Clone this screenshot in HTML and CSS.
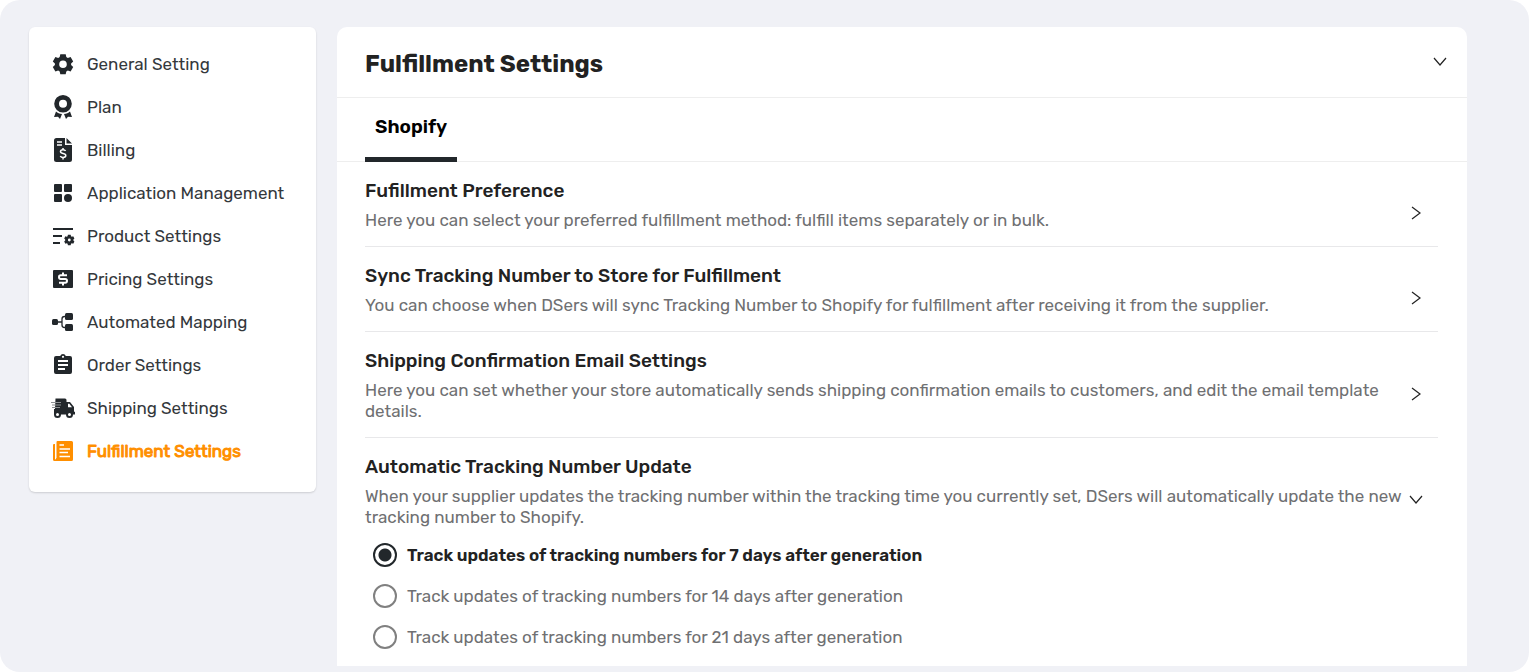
FILE: index.html
```
<!DOCTYPE html>
<html lang="en">
<head>
    <meta charset="UTF-8">
    <meta name="viewport" content="width=device-width, initial-scale=1.0">
    <title>Fulfillment Settings</title>
    <link rel="stylesheet" href="styles.css">
</head>
<body>
    <div class="page">
        <nav class="sidebar">
            <a class="nav-item" href="#general">
                <svg class="nav-icon" viewBox="0 0 24 24"><path fill-rule="evenodd" d="M9.300 2.200h5.400l.6 2.900 1.500.9 2.800-1 2.600 4.600-2.100 1.800v1.700l2.100 1.900-2.600 4.600-2.800-1-1.500.9-.6 2.800H9.300l-.6-2.800-1.500-.9-2.800 1L1.800 15l2.100-1.900v-1.700L1.800 9.600 4.400 5l2.800 1 1.500-.9zM12 8.400a3.800 3.800 0 1 0 0 7.600 3.800 3.800 0 0 0 0-7.600z"/></svg>
                General Setting
            </a>
            <a class="nav-item" href="#plan">
                <svg class="nav-icon" viewBox="0 0 24 24"><path fill-rule="evenodd" d="M12 0a8.800 8.800 0 1 1 0 17.600A8.800 8.800 0 0 1 12 0zm0 4.800a4 4 0 1 0 0 8 4 4 0 0 0 0-8z"/><path d="M5 16.500c1.600 1.500 3.500 2.200 6 2.400L9 24l-2-2.200-4 .2zM19 16.500c-1.600 1.500-3.500 2.200-6 2.400l2 5.100 2-2.200 4 .2z"/></svg>
                Plan
            </a>
            <a class="nav-item" href="#billing">
                <svg class="nav-icon" viewBox="0 0 24 24"><path d="M5.500 0H14v7h7v14.500a2.500 2.500 0 0 1-2.500 2.500h-13A2.500 2.500 0 0 1 3 21.500v-19A2.500 2.500 0 0 1 5.500 0zM15.500 0 21 5.600h-5.500z"/><path class="cut" d="M6 4h5M6 7h5M14.600 13c-.5-.9-1.400-1.300-2.600-1.300-1.500 0-2.500.7-2.500 1.900 0 2.700 5.300 1.200 5.300 4 0 1.200-1.100 1.900-2.700 1.900-1.300 0-2.300-.5-2.800-1.500M12 10v2M12 19.400v2"/></svg>
                Billing
            </a>
            <a class="nav-item" href="#applications">
                <svg class="nav-icon" viewBox="0 0 24 24"><rect x="3" y="3" width="8" height="8" rx="1"/><rect x="13" y="3" width="8" height="8" rx="1"/><rect x="3" y="13" width="8" height="8" rx="1"/><circle cx="17" cy="17" r="4"/></svg>
                Application Management
            </a>
            <a class="nav-item" href="#product">
                <svg class="nav-icon" viewBox="0 0 24 24"><path d="M2 4h20v2H2zM2 11h9v2H2zM2 18h7v2H2z"/><path fill-rule="evenodd" d="M16.900 10.800h2.800l.3 1.400.9.500 1.300-.4 1.200 2.100-1 1v1.200l1 1-1.200 2.100-1.300-.4-.9.500-.3 1.400h-2.800l-.3-1.400-.9-.5-1.300.4-1.200-2.100 1-1v-1.200l-1-1 1.200-2.100 1.300.4.900-.5zM18.300 14.600a1.400 1.400 0 1 0 0 2.800 1.400 1.400 0 0 0 0-2.800z"/></svg>
                Product Settings
            </a>
            <a class="nav-item" href="#pricing">
                <svg class="nav-icon" viewBox="0 0 24 24"><rect x="2" y="3" width="20" height="18" rx="1"/><path class="cut thick" d="M16 8.200H9.700c-1 0-1.700.7-1.700 1.800s.7 1.900 1.700 1.900h4.500c1 0 1.800.8 1.800 1.900s-.8 1.900-1.800 1.900H8M12 5.500v2.500M12 16v2.500"/></svg>
                Pricing Settings
            </a>
            <a class="nav-item" href="#mapping">
                <svg class="nav-icon" viewBox="0 0 24 24"><rect x="1" y="9" width="6" height="6" rx="1.500"/><rect x="14" y="3" width="8" height="7" rx="1.500"/><rect x="14" y="14" width="8" height="7" rx="1.500"/><path class="line" d="M7 12h4M15 6.500h-1.500q-2.500 0-2.500 2.500v6q0 2.500 2.500 2.500H15"/></svg>
                Automated Mapping
            </a>
            <a class="nav-item" href="#order">
                <svg class="nav-icon" viewBox="0 0 24 24"><path fill-rule="evenodd" d="M5 3h4.200a3 3 0 0 1 5.600 0H19a2 2 0 0 1 2 2v14a2 2 0 0 1-2 2H5a2 2 0 0 1-2-2V5a2 2 0 0 1 2-2zm7-.3a1.100 1.100 0 1 0 0 2.200 1.100 1.100 0 0 0 0-2.200z"/><path class="cut thick" d="M7 8h10M7 12h10M7 16h7"/></svg>
                Order Settings
            </a>
            <a class="nav-item" href="#shipping">
                <svg class="nav-icon" viewBox="0 0 24 24"><path d="M4.500 2.500h9.500q1.500 0 1.500 1.500v2H19l4 5v4.500l1 .5v2.500H3V13h1z"/><path class="streak" d="M0 6.500h10M1 9h9M1 11.500h8"/><path fill="#ffffff" d="M17 7.800h1.300l2.700 3.400h-4z"/><circle class="wheel" cx="6.500" cy="18.500" r="2.500"/><circle class="wheel" cx="18.500" cy="18.500" r="2.500"/></svg>
                Shipping Settings
            </a>
            <a class="nav-item active" href="#fulfillment">
                <svg class="nav-icon" viewBox="0 0 24 24"><path d="M6.500 2h14A1.500 1.500 0 0 1 22 3.500v17a1.500 1.500 0 0 1-1.500 1.500H7a2 2 0 0 0 .8-1.500H5.500V3a1 1 0 0 1 1-1zM4 5v15.500h2.300A1.500 1.500 0 0 1 5 22H3.500A1.500 1.500 0 0 1 2 20.500V6q0-1 1-1z"/><path d="M5.500 19h3v3h-5z"/><path class="cut" d="M8.500 6h4.500M8.500 10h10.500M8.500 13.500h8.500M8.500 17.500h10.500"/></svg>
                Fulfillment Settings
            </a>
        </nav>

        <main class="panel">
            <header class="panel-header">
                <h1>Fulfillment Settings</h1>
                <button class="toggle" aria-label="Collapse fulfillment settings">
                    <svg viewBox="0 0 14 14"><path d="M1 3l6 7 6-7"/></svg>
                </button>
            </header>
            <div class="tabs">
                <button class="tab">Shopify</button>
            </div>
            <div class="sections">
                <section class="section">
                    <div class="section-row">
                        <div class="section-text">
                            <h2>Fufillment Preference</h2>
                            <p>Here you can select your preferred fulfillment method: fulfill items separately or in bulk.</p>
                        </div>
                        <button class="toggle" aria-label="Open fulfillment preference">
                            <svg viewBox="0 0 14 14"><path d="M3 1l8 6-8 6"/></svg>
                        </button>
                    </div>
                </section>
                <section class="section">
                    <div class="section-row">
                        <div class="section-text">
                            <h2>Sync Tracking Number to Store for Fulfillment</h2>
                            <p>You can choose when DSers will sync Tracking Number to Shopify for fulfillment after receiving it from the supplier.</p>
                        </div>
                        <button class="toggle" aria-label="Open tracking number sync">
                            <svg viewBox="0 0 14 14"><path d="M3 1l8 6-8 6"/></svg>
                        </button>
                    </div>
                </section>
                <section class="section">
                    <div class="section-row">
                        <div class="section-text">
                            <h2>Shipping Confirmation Email Settings</h2>
                            <p>Here you can set whether your store automatically sends shipping confirmation emails to customers, and edit the email template details.</p>
                        </div>
                        <button class="toggle" aria-label="Open shipping confirmation email settings">
                            <svg viewBox="0 0 14 14"><path d="M3 1l8 6-8 6"/></svg>
                        </button>
                    </div>
                </section>
                <section class="section">
                    <div class="section-row">
                        <div class="section-text">
                            <h2>Automatic Tracking Number Update</h2>
                            <p>When your supplier updates the tracking number within the tracking time you currently set, DSers will automatically update the new tracking number to Shopify.</p>
                        </div>
                        <button class="toggle" aria-label="Close automatic tracking number update">
                            <svg viewBox="0 0 14 14"><path d="M1 3l6 7 6-7"/></svg>
                        </button>
                    </div>
                    <div class="options">
                        <label class="option">
                            <input type="radio" name="track-days" value="7" checked>
                            <span>Track updates of tracking numbers for 7 days after generation</span>
                        </label>
                        <label class="option">
                            <input type="radio" name="track-days" value="14">
                            <span>Track updates of tracking numbers for 14 days after generation</span>
                        </label>
                        <label class="option">
                            <input type="radio" name="track-days" value="21">
                            <span>Track updates of tracking numbers for 21 days after generation</span>
                        </label>
                    </div>
                </section>
            </div>
        </main>
    </div>
</body>
</html>
```
FILE: styles.css
```
* {
    margin: 0;
    padding: 0;
    box-sizing: border-box;
}

body {
    background-color: #ffffff;
    color: #22262a;
    font-family: Rubik, Roboto, sans-serif;
    font-size: 17px;
}

button {
    background: none;
    border: none;
    font-family: inherit;
    cursor: pointer;
}

.page {
    display: flex;
    align-items: flex-start;
    gap: 21px;
    min-height: 100vh;
    padding: 27px 62px 6px 29px;
    background-color: #f0f1f6;
    border-radius: 20px;
}

.sidebar {
    display: flex;
    flex-direction: column;
    flex: 0 0 287px;
    padding: 15px 22px 20px;
    background-color: #ffffff;
    border-radius: 6px;
    box-shadow: 0 1px 2px rgba(0, 0, 0, 0.15);
}

.nav-item {
    display: flex;
    align-items: center;
    gap: 12px;
    height: 43px;
    color: #34383c;
    text-decoration: none;
}

    .nav-item.active {
        color: #ff8f00;
        -webkit-text-stroke: 1px #ff8f00;
    }

.nav-icon {
    flex: none;
    width: 24px;
    height: 24px;
    fill: #22272b;
    overflow: visible;
}

    .nav-icon .cut {
        fill: none;
        stroke: #ffffff;
        stroke-width: 1.5;
    }

    .nav-icon .thick {
        stroke-width: 2;
    }

    .nav-icon .line {
        fill: none;
        stroke: #22272b;
        stroke-width: 1.3;
    }

    .nav-icon .streak {
        fill: none;
        stroke: #8c8f92;
        stroke-width: 1.2;
    }

    .nav-icon .wheel {
        fill: #ffffff;
        stroke: #22272b;
        stroke-width: 2;
    }

.active .nav-icon {
    fill: #ff8f00;
}

.panel {
    flex: 1;
    min-width: 0;
    background-color: #ffffff;
    border-radius: 10px 10px 0 0;
}

.panel-header {
    display: flex;
    justify-content: space-between;
    align-items: center;
    height: 71px;
    padding: 0 20px 0 28px;
    border-bottom: 1px solid #eeeeee;
}

    .panel-header h1 {
        padding-top: 3px;
        font-size: 24px;
        font-weight: 700;
        line-height: 32px;
        color: #222222;
    }

.toggle {
    display: flex;
    flex: none;
}

    .toggle svg {
        width: 14px;
        height: 14px;
        fill: none;
        stroke: #222222;
        stroke-width: 1.2;
    }

.tabs {
    display: flex;
    height: 64px;
    padding-left: 28px;
    box-shadow: inset 0 -1px #eeeeee;
}

.tab {
    padding: 0 10px 2px;
    border-bottom: 5px solid #22272b;
    font-size: 19px;
    font-weight: 600;
    color: #000000;
}

.sections {
    padding: 0 29px 0 28px;
}

.section {
    padding: 17px 0 15px;
    border-bottom: 1px solid #e8e8ea;
}

    .section:last-child {
        padding-bottom: 17px;
        border-bottom: none;
    }

.section-row {
    display: flex;
    align-items: center;
    justify-content: space-between;
    padding-right: 15px;
}

    .section-row .toggle {
        padding-top: 16px;
    }

.section-text h2 {
    margin-bottom: 7px;
    font-size: 19px;
    font-weight: 500;
    line-height: 24px;
    color: #222222;
}

.section-text p {
    line-height: 21px;
    color: #6f7072;
}

.options {
    display: flex;
    flex-direction: column;
    gap: 17px;
    padding: 15px 0 0 8px;
}

.option {
    display: flex;
    align-items: center;
    gap: 10px;
    color: #6f7072;
    line-height: 24px;
    cursor: pointer;
}

    .option input {
        appearance: none;
        width: 24px;
        height: 24px;
        border: 2px solid #808080;
        border-radius: 50%;
    }

    .option input:checked {
        border-color: #22272b;
        background: radial-gradient(circle, #22272b 6px, #ffffff 7px);
    }

    .option input:checked + span {
        color: #222222;
        font-weight: 600;
    }
```
